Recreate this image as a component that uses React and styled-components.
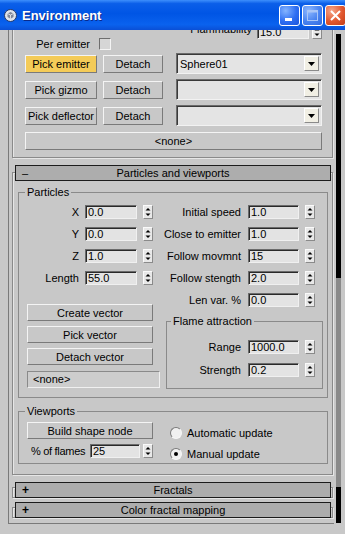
import React from "react";
import styled, { createGlobalStyle } from "styled-components";

const GlobalStyle = createGlobalStyle`
  html, body {
    margin: 0;
    padding: 0;
    background: #c8c8c8;
  }
  body {
    font-family: "Liberation Sans", Arial, sans-serif;
    font-size: 11px;
    color: #000;
  }
  * {
    box-sizing: border-box;
  }
`;

const Window = styled.div`
  width: 345px;
  height: 534px;
  display: flex;
  flex-direction: column;
  overflow: hidden;
  background: #c8c8c8;
`;

const TitleBar = styled.div`
  flex: none;
  height: 30px;
  display: flex;
  align-items: center;
  padding-left: 4px;
  background: linear-gradient(
    to bottom,
    #3d8ffc 0%,
    #0b5fe9 12%,
    #0055e5 45%,
    #0a62ee 82%,
    #0a4fd6 100%
  );
`;

const TitleText = styled.span`
  margin-left: 5px;
  color: #fff;
  font-size: 13px;
  font-weight: bold;
  text-shadow: 1px 1px 0 #0a2a8a;
`;

const CaptionGroup = styled.div`
  margin-left: auto;
  margin-right: -1px;
  display: flex;
  gap: 2px;
`;

const CaptionButton = styled.div`
  width: 21px;
  height: 21px;
  border: 1px solid #fff;
  border-radius: 3px;
  display: flex;
  align-items: center;
  justify-content: center;
  background: ${(p) =>
    p.$close
      ? "radial-gradient(circle at 30% 25%, #f5a68a 0%, #e2582f 55%, #c23d18 100%)"
      : p.$disabled
      ? "radial-gradient(circle at 30% 25%, #8db8ff 0%, #4a84f0 55%, #2f68e0 100%)"
      : "radial-gradient(circle at 30% 25%, #84b4ff 0%, #2d6ef2 55%, #1a55db 100%)"};
`;

const Body = styled.div`
  flex: 1;
  display: flex;
  padding: 0 4px 10px 8px;
`;

const Panel = styled.div`
  width: 326px;
  height: 494px;
  border-left: 1px solid #7a7a7a;
  border-bottom: 1px solid #7a7a7a;
  padding: 0 1px 0 3px;
  overflow: hidden;
  display: flex;
  flex-direction: column;
`;

const ScrollTrack = styled.div`
  width: 5px;
  margin-left: 2px;
  padding-top: 4px;
  display: flex;
  flex-direction: column;
`;

const ScrollSegment = styled.div`
  flex: none;
  height: ${(p) => p.$h}px;
  background: ${(p) => (p.$dark ? "#000" : "#8a8a8a")};
`;

const Frame = styled.div`
  flex: none;
  margin-top: ${(p) => p.$mt}px;
  padding: ${(p) => p.$pad || "0"};
  border: 1px solid #8a8a8a;
  box-shadow: 1px 1px 0 #e6e6e6, inset 1px 1px 0 #e6e6e6;
`;

const RolloutHeader = styled.div`
  height: 16px;
  margin: ${(p) => p.$mt}px 1px ${(p) => p.$mb || 0}px 2px;
  border: 1px solid #1c1c1c;
  background: #adadad;
  display: grid;
  grid-template-columns: 20px 1fr 20px;
  align-items: center;
  line-height: 14px;
`;

const HeaderSign = styled.span`
  padding-left: 6px;
  font-weight: ${(p) => (p.$bold ? "bold" : "normal")};
  font-size: ${(p) => (p.$bold ? "12px" : "11px")};
`;

const HeaderTitle = styled.span`
  text-align: center;
  white-space: nowrap;
`;

const TopRow = styled.div`
  display: flex;
  align-items: flex-start;
  height: 24px;
`;

const PerEmitter = styled.div`
  display: flex;
  align-items: center;
  height: 13px;
  margin-top: 11px;
`;

const InlineLabel = styled.span`
  width: ${(p) => (p.$w ? `${p.$w}px` : "auto")};
  flex: none;
  align-self: ${(p) => (p.$raised ? "flex-start" : "auto")};
  margin-top: ${(p) => (p.$raised ? -3 : 0)}px;
  text-align: ${(p) => (p.$left ? "left" : "right")};
  margin-left: ${(p) => p.$ml || 0}px;
  letter-spacing: ${(p) => (p.$tight ? "-0.3px" : "normal")};
  white-space: nowrap;
  line-height: 14px;
`;

const Checkbox = styled.span`
  width: 12px;
  height: 12px;
  margin-left: 9px;
  background: #d6d6d6;
  border: 1px solid;
  border-color: #6e6e6e #f4f4f4 #f4f4f4 #6e6e6e;
`;

const Flammability = styled.div`
  margin-left: auto;
  margin-top: -1px;
  display: flex;
  align-items: center;
  height: 14px;
`;

const PickRow = styled.div`
  display: flex;
  align-items: center;
  height: 21px;
  margin-top: ${(p) => p.$mt}px;
`;

const Button = styled.button`
  flex: none;
  width: ${(p) => (p.$w ? `${p.$w}px` : "100%")};
  height: ${(p) => p.$h || 17}px;
  margin: ${(p) => p.$mt || 0}px 0 0 ${(p) => p.$ml || 0}px;
  padding: 0;
  font-family: inherit;
  font-size: 11px;
  line-height: 14px;
  color: #000;
  text-align: center;
  white-space: nowrap;
  background: ${(p) => (p.$active ? "#f4cb58" : "#c8c8c8")};
  border: 1px solid;
  border-color: #f4f4f4 #7a7a7a #7a7a7a #f4f4f4;
`;

const Field = styled.div`
  flex: none;
  width: ${(p) => p.$w}px;
  height: 14px;
  margin-left: ${(p) => p.$ml || 0}px;
  padding-left: 2px;
  line-height: 12px;
  background: #e3e3e3;
  border: 1px solid;
  border-color: #6b6b6b #f0f0f0 #f0f0f0 #6b6b6b;
  box-shadow: inset 1px 1px 0 #2a2a2a;
  white-space: nowrap;
  overflow: hidden;
`;

const NoneField = styled.div`
  height: 17px;
  margin-top: 6px;
  padding-left: 5px;
  line-height: 15px;
  background: #cdcdcd;
  border: 1px solid;
  border-color: #8a8a8a #f0f0f0 #f0f0f0 #8a8a8a;
`;

const SpinBox = styled.div`
  flex: none;
  width: 10px;
  height: 14px;
  margin-left: ${(p) => p.$ml}px;
  background: #e8e8e8;
  border: 1px solid;
  border-color: #fafafa #8a8a8a #8a8a8a #fafafa;
  display: flex;
`;

const Dropdown = styled.div`
  flex: 1;
  height: 21px;
  margin-left: 13px;
  padding: 0 2px 0 3px;
  display: flex;
  align-items: center;
  justify-content: space-between;
  background: #e4e4e4;
  border: 1px solid;
  border-color: #6b6b6b #f2f2f2 #f2f2f2 #6b6b6b;
  box-shadow: inset 1px 1px 0 #3a3a3a;
`;

const DropArrow = styled.div`
  width: 15px;
  height: 15px;
  display: flex;
  align-items: center;
  justify-content: center;
  background: #f1efe4;
  border: 1px solid;
  border-color: #ffffff #8a8a8a #8a8a8a #ffffff;
`;

const Group = styled.fieldset`
  margin: ${(p) => p.$mt}px ${(p) => p.$mr}px 0 ${(p) => p.$ml}px;
  padding: 0;
  min-inline-size: 0;
  border: 1px solid #8a8a8a;
`;

const Legend = styled.legend`
  margin-left: ${(p) => p.$ml}px;
  padding: 0 2px;
  line-height: 13px;
  font-size: 11px;
`;

const Columns = styled.div`
  display: flex;
`;

const Column = styled.div`
  flex: ${(p) => (p.$w ? "none" : "1")};
  width: ${(p) => (p.$w ? `${p.$w}px` : "auto")};
  padding: ${(p) => p.$pad};
  display: flex;
  flex-direction: column;
`;

const ParamRow = styled.div`
  display: flex;
  align-items: center;
  justify-content: ${(p) => (p.$end ? "flex-end" : "flex-start")};
  width: ${(p) => (p.$w ? `${p.$w}px` : "auto")};
  height: 14px;
  margin-top: ${(p) => p.$mt || 0}px;
  padding-right: ${(p) => p.$pr || 0}px;
`;

const RadioRow = styled.div`
  display: flex;
  align-items: center;
  height: 14px;
  margin-top: ${(p) => p.$mt || 0}px;
`;

const Radio = styled.span`
  width: 12px;
  height: 12px;
  border-radius: 50%;
  border: 1px solid;
  border-color: #7a7a7a #f6f6f6 #f6f6f6 #7a7a7a;
  background: #f0f0f0;
  display: flex;
  align-items: center;
  justify-content: center;

  &::after {
    content: "";
    width: 4px;
    height: 4px;
    border-radius: 50%;
    background: ${(p) => (p.$checked ? "#000" : "transparent")};
  }
`;

const RadioText = styled.span`
  margin-left: 5px;
  white-space: nowrap;
`;

const AppIcon = () => (
  <svg width="13" height="13" viewBox="0 0 13 13">
    <circle cx="6.5" cy="6.5" r="6" fill="#dfe3ea" stroke="#23386b" strokeWidth="1" />
    <path d="M6.5 3 L9.5 4.5 L9.5 8 L6.5 9.8 L3.5 8 L3.5 4.5 Z" fill="#7f8799" />
    <path d="M3.5 4.5 L6.5 6 L9.5 4.5 M6.5 6 V9.8" stroke="#fff" strokeWidth="0.7" fill="none" />
  </svg>
);

const Spinner = ({ ml = 6 }) => (
  <SpinBox $ml={ml}>
    <svg width="8" height="12" viewBox="0 0 8 12">
      <path d="M4 2 L6.5 4.5 L1.5 4.5 Z" fill="#000" />
      <path d="M1.5 7.5 L6.5 7.5 L4 10 Z" fill="#000" />
    </svg>
  </SpinBox>
);

const DownArrow = () => (
  <svg width="7" height="4" viewBox="0 0 7 4">
    <path d="M0 0 H7 L3.5 4 Z" fill="#000" />
  </svg>
);

const pickRows = [
  { label: "Pick emitter", value: "Sphere01", active: true, mt: 3 },
  { label: "Pick gizmo", value: "", mt: 5 },
  { label: "Pick deflector", value: "", mt: 5 },
];

const leftParams = [
  ["X", "0.0"],
  ["Y", "0.0"],
  ["Z", "1.0"],
  ["Length", "55.0"],
];

const rightParams = [
  ["Initial speed", "1.0"],
  ["Close to emitter", "1.0"],
  ["Follow movmnt", "15"],
  ["Follow stength", "2.0"],
  ["Len var. %", "0.0"],
];

const flameParams = [
  ["Range", "1000.0", 12],
  ["Strength", "0.2", 9],
];

export default function App() {
  return (
    <>
      <GlobalStyle />
      <Window>
        <TitleBar>
          <AppIcon />
          <TitleText>Environment</TitleText>
          <CaptionGroup>
            <CaptionButton>
              <svg width="19" height="19" viewBox="0 0 19 19">
                <rect x="5" y="12" width="7" height="3" fill="#fff" />
              </svg>
            </CaptionButton>
            <CaptionButton $disabled>
              <svg width="19" height="19" viewBox="0 0 19 19">
                <rect x="4.5" y="4.5" width="10" height="10" fill="none" stroke="#a9c6f7" strokeWidth="1" />
                <rect x="4.5" y="4.5" width="10" height="2" fill="#a9c6f7" />
              </svg>
            </CaptionButton>
            <CaptionButton $close>
              <svg width="19" height="19" viewBox="0 0 19 19">
                <path d="M5 5 L14 14 M14 5 L5 14" stroke="#fff" strokeWidth="2" />
              </svg>
            </CaptionButton>
          </CaptionGroup>
        </TitleBar>

        <Body>
          <Panel>
            <Frame $mt={-10} $pad="5px 10px 7px 12px">
              <TopRow>
                <PerEmitter>
                  <InlineLabel $w={65}>Per emitter</InlineLabel>
                  <Checkbox />
                </PerEmitter>
                <Flammability>
                  <InlineLabel $raised>Flammability</InlineLabel>
                  <Field $w={52} $ml={5}>15.0</Field>
                  <Spinner ml={3} />
                </Flammability>
              </TopRow>
              {pickRows.map((r) => (
                <PickRow key={r.label} $mt={r.mt}>
                  <Button $w={72} $h={18} $active={r.active}>
                    {r.label}
                  </Button>
                  <Button $w={60} $h={18} $ml={6}>
                    Detach
                  </Button>
                  <Dropdown>
                    <span>{r.value}</span>
                    <DropArrow>
                      <DownArrow />
                    </DropArrow>
                  </Dropdown>
                </PickRow>
              ))}
              <Button $h={18} $mt={6}>
                &lt;none&gt;
              </Button>
            </Frame>

            <Frame $mt={14} $pad="0 0 10px 0">
              <RolloutHeader $mt={-8}>
                <HeaderSign>–</HeaderSign>
                <HeaderTitle>Particles and viewports</HeaderTitle>
                <span />
              </RolloutHeader>

              <Group $mt={5} $ml={5} $mr={4}>
                <Legend $ml={6}>Particles</Legend>
                <Columns>
                  <Column $w={141} $pad="6px 0 9px 8px">
                    {leftParams.map(([label, value], i) => (
                      <ParamRow key={label} $mt={i ? 8 : 0}>
                        <InlineLabel $w={52}>{label}</InlineLabel>
                        <Field $w={52} $ml={6}>{value}</Field>
                        <Spinner />
                      </ParamRow>
                    ))}
                    <Button $w={126} $mt={19}>Create vector</Button>
                    <Button $w={126} $mt={5}>Pick vector</Button>
                    <Button $w={126} $mt={5}>Detach vector</Button>
                    <NoneField>&lt;none&gt;</NoneField>
                  </Column>
                  <Column $pad="6px 0 8px 0">
                    {rightParams.map(([label, value], i) => (
                      <ParamRow key={label} $end $mt={i ? 8 : 0} $pr={12}>
                        <InlineLabel>{label}</InlineLabel>
                        <Field $w={51} $ml={7}>{value}</Field>
                        <Spinner />
                      </ParamRow>
                    ))}
                    <Group $mt={8} $ml={6} $mr={4}>
                      <Legend $ml={4}>Flame attraction</Legend>
                      <Column $pad="0 7px 11px 0">
                        {flameParams.map(([label, value, mt]) => (
                          <ParamRow key={label} $end $mt={mt}>
                            <InlineLabel>{label}</InlineLabel>
                            <Field $w={51} $ml={7}>{value}</Field>
                            <Spinner />
                          </ParamRow>
                        ))}
                      </Column>
                    </Group>
                  </Column>
                </Columns>
              </Group>

              <Group $mt={7} $ml={5} $mr={4}>
                <Legend $ml={6}>Viewports</Legend>
                <Columns>
                  <Column $w={141} $pad="4px 0 5px 8px">
                    <Button $w={126}>Build shape node</Button>
                    <ParamRow $mt={5} $w={126}>
                      <InlineLabel $left $ml={4} $tight>% of flames</InlineLabel>
                      <Field $w={50} style={{ marginLeft: "auto" }}>25</Field>
                      <Spinner ml={3} />
                    </ParamRow>
                  </Column>
                  <Column $pad="8px 0 0 10px">
                    <RadioRow>
                      <Radio />
                      <RadioText>Automatic update</RadioText>
                    </RadioRow>
                    <RadioRow $mt={7}>
                      <Radio $checked />
                      <RadioText>Manual update</RadioText>
                    </RadioRow>
                  </Column>
                </Columns>
              </Group>
            </Frame>

            <Frame $mt={12}>
              <RolloutHeader $mt={-6} $mb={-1}>
                <HeaderSign $bold>+</HeaderSign>
                <HeaderTitle>Fractals</HeaderTitle>
                <span />
              </RolloutHeader>
            </Frame>

            <Frame $mt={9}>
              <RolloutHeader $mt={-6} $mb={-1}>
                <HeaderSign $bold>+</HeaderSign>
                <HeaderTitle>Color fractal mapping</HeaderTitle>
                <span />
              </RolloutHeader>
            </Frame>
          </Panel>

          <ScrollTrack>
            <ScrollSegment $dark $h={244} />
            <ScrollSegment $h={209} />
            <ScrollSegment $dark $h={36} />
          </ScrollTrack>
        </Body>
      </Window>
    </>
  );
}
